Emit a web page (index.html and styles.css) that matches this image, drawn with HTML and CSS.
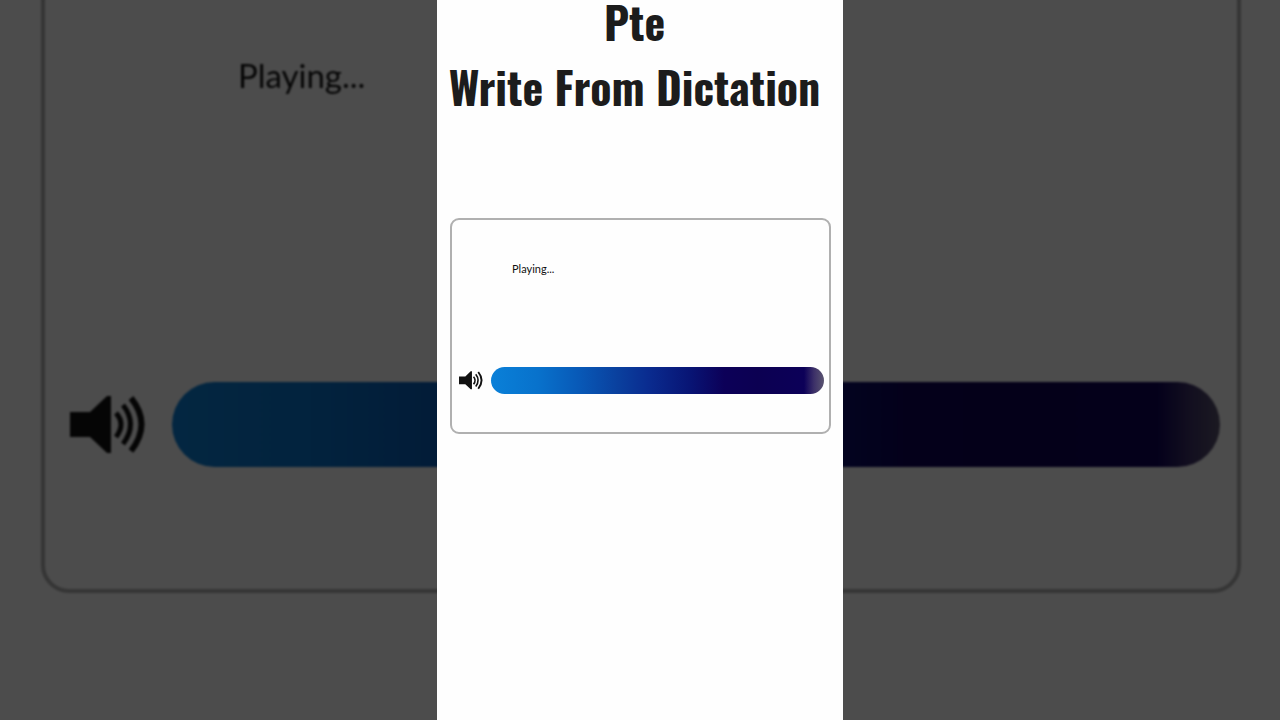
FILE: index.html
```
<!DOCTYPE html>
<html lang="en">
<head>
  <meta charset="UTF-8" />
  <meta name="viewport" content="width=device-width, initial-scale=1.0" />
  <title>Pte Write From Dictation</title>
  <link rel="stylesheet" href="styles.css">
</head>
<body>

  <!-- speaker icon, used by both players -->
  <svg class="sprite" aria-hidden="true">
    <symbol id="speaker" viewBox="0 0 76 58">
      <path d="M0 16H20L37 0H41V57H37L20 41H0Z" fill="currentColor" />
      <g fill="none" stroke="currentColor">
        <path d="M46 17Q56 28 46 41" stroke-width="5" />
        <path d="M53 9Q68 28 53 48" stroke-width="5" />
        <path d="M61 2Q82 28 61 55" stroke-width="6" />
      </g>
    </symbol>
  </svg>

  <div class="stage">
    <div class="backdrop" aria-hidden="true">
      <div class="player player-large">
        <div class="status">Playing...</div>
        <div class="track">
          <svg class="speaker"><use href="#speaker" /></svg>
          <div class="bar"></div>
        </div>
      </div>
    </div>

    <main class="panel">
      <h1>Pte<br>Write From Dictation</h1>
      <div class="player">
        <div class="status">Playing...</div>
        <div class="track">
          <svg class="speaker"><use href="#speaker" /></svg>
          <div class="bar" role="progressbar" aria-label="Audio playback"></div>
        </div>
      </div>
    </main>
  </div>

</body>
</html>
```
FILE: styles.css
```
* {
  box-sizing: border-box;
}
body {
  margin: 0;
  font-family: Lato, sans-serif;
  color: #111;
  background: #4c4c4c;
}
.sprite {
  display: none;
}
.stage {
  display: grid;
  grid-template-rows: 100vh;
  grid-template-columns: 100%;
  height: 100vh;
  overflow: hidden;
}
.backdrop,
.panel {
  grid-area: 1 / 1;
}

/* enlarged, darkened copy behind the panel */
.backdrop {
  display: flex;
  flex-direction: column;
  justify-content: flex-end;
  padding: 0 39px 127px 41px;
  background: white;
  filter: brightness(0.3) blur(1px);
}
.panel {
  z-index: 1;
  justify-self: center;
  width: 406px;
  max-width: 100%;
  padding: 0 12px 0 13px;
  background: #fefefe;
}
h1 {
  margin: -11px 6px 99px -6px;
  font-family: Oswald, "Liberation Sans Narrow", sans-serif;
  font-size: 44px;
  font-weight: bold;
  line-height: 65px;
  text-align: center;
  white-space: nowrap;
  color: #1c1c1c;
}

.player {
  padding: 41px 5px 38px 7px;
  border: 2px solid #b0b0b0;
  border-radius: 9px;
}
.status {
  margin: 0 0 90px 53px;
  font-size: 11px;
  line-height: 16px;
}
.track {
  display: flex;
  align-items: center;
  gap: 8px;
}
.speaker {
  width: 24px;
  height: 19px;
}
.bar {
  flex: 1;
  height: 27px;
  border-radius: 14px;
  background: linear-gradient(to right, #0a80d8 0%, #0872cc 14%, #085ab8 26%, #0a409e 38%, #0a2c90 47%, #081474 60%, #0c0058 70%, #0c0052 80%, #0c0058 94%, #3c3068 97%, #5a5470 100%);
}

.player-large {
  padding: 135px 17px 122px 25px;
  border-width: 4px;
  border-radius: 28px;
}
.player-large .status {
  margin: 0 0 287px 168px;
  font-size: 33px;
  line-height: 40px;
}
.player-large .track {
  gap: 26px;
}
.player-large .speaker {
  width: 76px;
  height: 58px;
}
.player-large .bar {
  height: 85px;
  border-radius: 43px;
}
```
